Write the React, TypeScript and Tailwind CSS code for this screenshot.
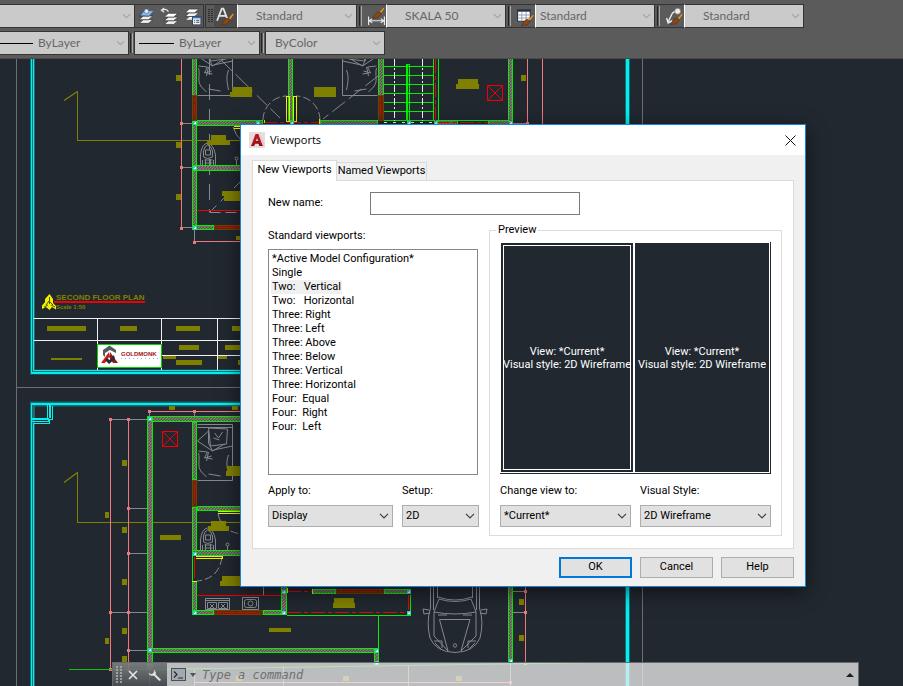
import React from 'react';

const GREEN = '#00f000';
const OLIVE = '#808000';
const PINK = '#f07878';
const GRAY = '#86898c';
const CYAN = '#00f0f0';

/* ---------- toolbar ---------- */

function Chevron({ className }: { className: string }) {
  return (
    <svg viewBox="0 0 10 6" className={className} fill="none" stroke="currentColor" strokeWidth="1.2" aria-hidden="true">
      <path d="M1 .8 5 4.8 9 .8" />
    </svg>
  );
}

function ToolCombo({ label, value, className, pad, line }: { label: string; value: string; className: string; pad: string; line?: string }) {
  return (
    <div className={`relative h-6 border border-[#333] bg-[#cacaca] ${className}`}>
      <select aria-label={label} className={`block h-full w-full appearance-none bg-transparent text-xs leading-[22px] text-[#666] outline-none ${pad}`}>
        <option>{value}</option>
      </select>
      {line && <span className={`pointer-events-none absolute top-[11px] h-px bg-black ${line}`} />}
      <Chevron className="pointer-events-none absolute right-[3px] top-2 h-[6px] w-[9px] text-[#a2a2a2]" />
    </div>
  );
}

function Sheets({ y = 0, x = 0, top = '#fff' }: { x?: number; y?: number; top?: string }) {
  return (
    <g transform={`translate(${x} ${y})`} stroke="#2c2c2c" strokeWidth=".6">
      <path d="M0 11.5 4 8h9l-4 3.500z" fill="#f2f2f2" />
      <path d="M0 8 4 4.500h9L9 8z" fill="#f2f2f2" />
      <path d="M0 4.500 4 1h9L9 4.500z" fill={top} />
    </g>
  );
}

function Brush({ x, y }: { x: number; y: number }) {
  return (
    <g transform={`translate(${x} ${y})`}>
      <path d="M7 4.500 11 0l1 1-3.500 5z" fill="#f0a030" stroke="#6b3a10" strokeWidth=".5" />
      <path d="M5.500 4.500 8.500 6.500 6 9.500C4 11 2 10 0 10.500 2 9.500 2 6 5.500 4.500z" fill="#8a4718" stroke="#5a2a0c" strokeWidth=".6" />
    </g>
  );
}

function IconButton({ label, className, children }: { label: string; className: string; children: React.ReactNode }) {
  return (
    <button type="button" aria-label={label} className={`flex h-[22px] items-center justify-center ${className}`}>
      <svg viewBox="0 0 18 18" className="h-[19px] w-[19px]" fill="none" aria-hidden="true">
        {children}
      </svg>
    </button>
  );
}

function Separator() {
  return <div className="h-5 w-[3px] border-l border-r border-l-[#222] border-r-[#a8a8a8]" />;
}

function Toolbars() {
  return (
    <div className="flex flex-col gap-[3px] border-b border-[#4a4a4a] bg-[#5b5b5b] pb-[3px] pt-1 font-['Lato','Open_Sans',sans-serif]">
      <div className="flex h-6 items-center">
        <div className="flex items-center border-y border-r border-[#333]">
          <ToolCombo label="Layer" value="" className="-my-px w-[135px] border-l-0" pad="pl-2" />
          <IconButton label="Make object's layer current" className="w-[23px]">
            <Sheets x={2} y={4} top="#5b93d8" />
            <path d="M3 8 7 3.500h9L11.500 8.500z" fill="#8db8ec" stroke="#24548c" strokeWidth=".5" />
            <circle cx="9" cy="4" r="2.200" fill="#dfe8f5" stroke="#456" strokeWidth=".5" />
          </IconButton>
          <IconButton label="Layer previous" className="w-[23px]">
            <Sheets x={4} y={5} />
            <path d="M8 4.500C7 2 4 2 1.500 3M4 .8 1.300 3 4 5" stroke="#e8e8e8" strokeWidth="1.100" />
          </IconButton>
          <IconButton label="Layer states" className="w-[22px]">
            <Sheets x={2} y={1} />
            <rect x="9" y="9" width="8" height="8" fill="#eef2f8" stroke="#33445c" />
            <path d="M9 10h8" stroke="#3d6fae" strokeWidth="1.500" />
            <path d="M10.500 12.500h1m1 0h3m-5 2h1m1 0h3" stroke="#444" />
          </IconButton>
        </div>
        <div className="ml-px flex h-6 items-center border-y border-l border-[#333] pl-0.5">
          <svg viewBox="0 0 5 14" className="mr-px h-[14px] w-[5px]" aria-hidden="true">
            <path d="M1 0v14M4 0v14" stroke="#1d1d1d" strokeWidth="1.500" strokeDasharray="1 1" />
          </svg>
          <IconButton label="Text style" className="w-[23px] bg-[#4c4c4c]">
            <path d="M1 13 5.500 1.500h1.500L11 12M3 8.500h6" stroke="#e4e4e4" strokeWidth="1.700" />
            <Brush x={5} y={6} />
          </IconButton>
        </div>
        <ToolCombo label="Text style name" value="Standard" className="w-[120px] border-l-white" pad="pl-[18px]" />
        <div className="flex h-6 items-center border-y border-[#333] pl-0.5">
          <Separator />
          <IconButton label="Dimension style" className="ml-1 w-5">
            <path d="M1.500 9v8M16.500 9v8M2 13h14M5 11l-3 2 3 2M13 11l3 2-3 2" stroke="#e8e8e8" strokeWidth="1.100" />
            <Brush x={5} y={0} />
          </IconButton>
        </div>
        <ToolCombo label="Dimension style name" value="SKALA 50" className="w-[120px] border-l-white" pad="pl-[18px]" />
        <div className="flex h-6 items-center border-y border-[#333] pl-0.5">
          <Separator />
          <IconButton label="Table style" className="ml-1 w-5">
            <rect x="1.500" y="2.500" width="12" height="11" fill="#fff" stroke="#28384c" />
            <path d="M1 3.500h13" stroke="#28384c" strokeWidth="2" />
            <path d="M2 7.500h11M2 10.500h11M5.500 5v8M9.500 5v8" stroke="#9aa2ad" />
            <Brush x={5} y={7} />
          </IconButton>
        </div>
        <ToolCombo label="Table style name" value="Standard" className="w-[120px] border-l-white" pad="pl-1" />
        <div className="flex h-6 items-center border-y border-[#333] pl-0.5">
          <Separator />
          <IconButton label="Multileader style" className="ml-1 w-5">
            <path d="M12 4C6 4 7 7 3 14M1.500 10.500 3 15l4-2" stroke="#e8e8e8" strokeWidth="1.400" />
            <circle cx="12" cy="4" r="2.800" fill="#eee" stroke="#777" strokeWidth=".6" />
            <Brush x={5} y={6} />
          </IconButton>
        </div>
        <ToolCombo label="Multileader style name" value="Standard" className="w-[120px] border-l-white" pad="pl-[18px]" />
      </div>
      <div className="flex h-6 items-center gap-px">
        <ToolCombo label="Linetype" value="ByLayer" className="w-[129px] border-l-0" pad="pl-[38px]" line="left-0 w-[33px]" />
        <Separator />
        <ToolCombo label="Lineweight" value="ByLayer" className="w-[126px]" pad="pl-11" line="left-1 w-[35px]" />
        <Separator />
        <ToolCombo label="Plot style" value="ByColor" className="w-[120px]" pad="pl-[9px]" />
      </div>
    </div>
  );
}

/* ---------- drawing ---------- */

type Box = [number, number, number, number];

const walls: Box[] = [
  [192, 58, 5, 172], [197, 120, 66, 6], [192, 165, 52, 6], [192, 225, 22, 5],
  [288, 58, 5, 63], [320, 120, 58, 6], [378, 58, 6, 63], [438, 120, 20, 6],
  [488, 120, 25, 6], [508, 58, 5, 64],
  [147, 416, 100, 6], [147, 416, 6, 254], [192, 422, 5, 58], [192, 507, 5, 48],
  [197, 506, 50, 5], [192, 550, 54, 6], [192, 581, 5, 34], [192, 610, 22, 5],
  [263, 610, 22, 5], [147, 648, 231, 5], [374, 648, 5, 17], [281, 580, 6, 35],
  [312, 589, 24, 5], [384, 589, 27, 5], [508, 580, 5, 83],
];

const browns: Box[] = [
  [192, 95, 5, 26], [214, 225, 30, 5], [378, 95, 6, 26], [192, 480, 5, 27],
  [214, 610, 49, 5], [336, 589, 48, 5],
];

const tags: Box[] = [
  [176, 75, 5, 6], [176, 142, 5, 6], [176, 194, 5, 6], [236, 236, 6, 4],
  [211, 135, 15, 5], [207, 140, 23, 5], [222, 191, 20, 5], [224, 196, 18, 5],
  [232, 87, 20, 5], [230, 92, 22, 5], [314, 87, 22, 10], [458, 79, 20, 5],
  [456, 84, 23, 5], [521, 75, 5, 6],
  [47, 326, 39, 5], [120, 326, 17, 5], [176, 326, 24, 5], [232, 326, 10, 5],
  [179, 345, 20, 5], [225, 345, 17, 5], [176, 360, 26, 5], [163, 356, 13, 3],
  [218, 356, 9, 3], [238, 360, 5, 5], [51, 358, 31, 2],
  [169, 406, 6, 4], [232, 406, 6, 4],
  [122, 460, 5, 6], [122, 527, 5, 6], [122, 579, 5, 6], [122, 628, 5, 6],
  [122, 656, 5, 6], [105, 512, 4, 6], [105, 638, 4, 6],
  [227, 466, 15, 5], [226, 471, 16, 5], [160, 535, 21, 5], [211, 521, 15, 5],
  [208, 526, 21, 5], [222, 576, 20, 5], [220, 581, 22, 5],
  [334, 598, 20, 5], [333, 603, 22, 5], [269, 628, 22, 4], [519, 599, 5, 6],
  [519, 635, 5, 6], [343, 676, 6, 5], [456, 676, 6, 5], [236, 676, 6, 5],
];

const nodes: [number, number][] = [
  [194, 122], [194, 167], [194, 227], [257, 122], [291, 122], [408, 122], [435, 122],
  [510, 122], [149, 418], [194, 553], [194, 612], [149, 649], [283, 612], [283, 591],
  [408, 591], [408, 612], [376, 650], [376, 662], [510, 660],
];

const dots: [number, number][] = [
  [181, 123], [181, 167], [181, 228], [194, 242], [149, 411], [194, 411],
  [110, 419], [128, 419], [128, 508], [128, 553], [110, 612], [128, 612],
  [128, 650], [110, 669], [128, 669], [527, 123], [525, 591], [525, 612],
  [525, 663], [510, 682],
];

function Bed({ y, flip }: { y: number; flip?: boolean }) {
  return (
    <g transform={flip ? `translate(377.500 ${y}) scale(-1 1)` : `translate(197.500 ${y})`} fill="none" stroke={GRAY}>
      <path d="M0 .5H35V56.500H0M0 3.500H35" />
      <path d="M11 4 30 5 29 20 13 22 11 4M0 17 11 7 11 19 15 27 0 17M16 26 35 22M15 27l12-7M1 27l9 1-3 6 7-2M17 9l4 5 4-6M16 14l6 2" />
      <path d="M1 29C3 36-1 42 4 48l5 5M11 28l-2 9M9 34l6 1M31 31c-3 8-1 14 0 20M11 50l12 2" />
    </g>
  );
}

function Toilet({ y }: { y: number }) {
  return (
    <g transform={`translate(200.500 ${y})`} fill="none" stroke={GRAY}>
      <path d="M0 22V12Q1 1 7 0 13 1 15 12V22M3 14V8Q4 3 7 2 11 3 12 8V14Q7 17 3 14ZM5 12V7h5v5zM4 17h8M4 20h8M5 16v6M10 16v6M2 22v-5M13 22v-5" />
    </g>
  );
}

function CrossBox({ x, y }: { x: number; y: number }) {
  return <path d={`M${x} ${y}h15v15h-15zl15 15M${x + 15} ${y}l-15 15`} fill="none" stroke="#f00000" />;
}

function Car() {
  return (
    <g fill="none" stroke={GRAY}>
      <path d="M430.500 580V608Q426 622 430 638 436 652 455 652.500 474 652 480 638 484 622 479.500 608V580M433.500 580V610M476.500 580V610M437.500 580V598M472.500 580V598" />
      <path d="M438 597Q455 603 472 597M434 612 439 599Q455 604 471 599L476 612Q455 616 434 612M438 615h9M463 615h9" />
      <path d="M439.500 619.500H470L461 651M439.500 619.500 448 651M434 612V636L448 651M476 612V636L461 651M434 641h8v7M476 641h-8v7M435 643l6 6M475 643l-6 6" />
      <path d="M430 613 424 614 423 609 429 610M480 613 486 614 487 609 481 610" />
      <circle cx="455" cy="645.500" r="1.700" />
    </g>
  );
}

function Drawing() {
  return (
    <svg viewBox="0 59 903 627" width="903" height="627" className="absolute left-0 top-0" role="img" aria-label="Floor plan drawing">
      <defs>
        <pattern id="hatch" width="3" height="3" patternUnits="userSpaceOnUse">
          <rect width="3" height="3" fill="#555656" />
          <path d="M0 3 3 0" stroke="#9a7878" strokeWidth="1.200" />
        </pattern>
      </defs>

      {/* sheet borders */}
      <g fill="none" stroke="#6c6e70" shapeRendering="crispEdges">
        <path d="M16.500 59V686M642.500 59V686M16 387.500H642" />
      </g>
      <path d="M32.500 59V372H627.500V59M627.500 403V686M32.500 686V404H628" fill="none" stroke={CYAN} strokeOpacity=".35" strokeWidth="5" />
      <g fill="none" stroke={CYAN} shapeRendering="crispEdges">
        <path d="M31.500 59V373M33.500 59V370.500H626.500V59" />
        <path d="M31 373H629M628 59V373M628 403V686M31 404H629" strokeWidth="2" />
        <path d="M31.500 403V686M33.500 423V686M626.500 406V686" />
        <path d="M47.500 404V418.500M50.500 404V418M52.500 406V419.500H49.500M49 419V423.500H33M31 421.500H48.500V418M31 418.500H48M49.500 404V418M31 419.500H48" />
      </g>

      {/* section markers */}
      <g fill="none" stroke="#808000">
        <path d="M64 100.500 77.500 91.500M64 482.500 77.500 472.500" strokeWidth="1.300" />
        <path d="M77.500 91V140.500H244M77.500 472V522.500H244" shapeRendering="crispEdges" />
      </g>

      {/* dimension lines */}
      <g fill="none" stroke={GRAY} shapeRendering="crispEdges">
        <path d="M181 123.500h12M181 167.500h12M181 227.500h12M194.500 230v12M149.500 411v6M194.500 411v6M110 419.500h38M128 508.500h20M128 553.500h20M110 612.500h38M128 650.500h20M513 123.500h14M513 591.500h12M513 612.500h12M194.500 670v16M283.500 666v20M408.500 665v21M510.500 663v23M149.500 670v16" />
      </g>
      <g fill="none" stroke={PINK} shapeRendering="crispEdges">
        <path d="M181.500 59V228M194 241.500H244M527.500 59V124M542.500 59V130M149 411.500H244M110.500 419V669M128.500 419V669M525.500 580V664M194 682.500H511" />
      </g>

      {/* furniture */}
      <Bed y={39} />
      <Bed y={39} flip />
      <Bed y={424} />
      <Toilet y={143} />
      <Toilet y={528} />
      <Car />
      <g fill="none" stroke={GRAY}>
        <path d="M209.500 59V212" strokeDasharray="16 9" />
        <path d="M209.500 212.500H244" strokeDasharray="11 5" />
        <path d="M210 212 244 178" strokeDasharray="9 6 14 5" />
        <path d="M222 61 280 118" strokeDasharray="14 5 24 6" />
        <path d="M378 76 323 119" strokeDasharray="16 5" />
        <path d="M263 120A24 24 0 0 1 287 96M320 120A24 24 0 0 0 296 96M222 557Q219 579 197 581M218 514Q222 532 242 534" strokeDasharray="8 3" />
        <path d="M233 127Q236 136 241 140" />
        <circle cx="236.500" cy="158.500" r="1.500" />
        <path d="M236.500 160v5M227.500 546v4" />
        <circle cx="227.500" cy="544.500" r="1.500" />
        <path d="M205.500 598.500h24v11h-24zM205 600.500h25M207.500 602.500h9v6h-9zM218.500 602.500h9v6h-9zM210 604l4 4M214 604l-4 4M221 604l4 4M225 604l-4 4" />
        <path d="M242.500 597.500h16v12h-16z" />
        <rect x="244.500" y="599.500" width="12" height="8" rx="2" />
        <circle cx="250.500" cy="603.500" r="2.500" />
        <path d="M263.500 580v15.500H281" />
      </g>

      {/* walls, windows and doors */}
      <g shapeRendering="crispEdges">
        {walls.map(([x, y, w, h], i) => (
          <g key={i}>
            <rect x={x} y={y} width={w} height={h} fill={GREEN} />
            <rect x={x + 1} y={y + 1} width={w - 2} height={h - 2} fill="url(#hatch)" />
          </g>
        ))}
        {browns.map(([x, y, w, h], i) => (
          <g key={i}>
            <rect x={x} y={y} width={w} height={h} fill="#7a3c00" />
            <rect x={x + 1} y={y + 1} width={w - 2} height={h - 2} fill="#55300c" />
            <path d={w > h ? `M${x + 3} ${y + 2.5}h${w - 6}` : `M${x + 2.5} ${y + 3}v${h - 6}`} stroke="#e00000" strokeDasharray="5 1 12 2" />
          </g>
        ))}
        <g fill="none" stroke={GREEN}>
          <path d="M384 66.500h49M384 75.500h49M384 84.500h49M384 93.500h49M384 102.500h49M384 111.500h49M406.500 121V64.500H409.500V121M407.500 64V121M433.500 59V121M438.500 59V121M384 120.500H438M458 120.500h30" />
          <path d="M287 615.500H410.500V595M378.500 615V648M192.500 555V582" />
        </g>
        <g fill="none" stroke="#f0f0f0">
          <path d="M394.500 59V121M422.500 59V121" strokeDasharray="7 2 2 2" />
          <path d="M384 122.500h50" strokeDasharray="3 6" />
        </g>
        <g fill="none" stroke="#f00000">
          <path d="M197 210.500H244M197 595.500H281M408.500 595V610M194.500 557V578" />
          <path d="M435.500 59V121M436 122.500H488M263 122.500H320M287 591.500H312M287 612.500H405" strokeDasharray="14 3 4 3" />
        </g>
        <g fill="none" stroke="#f0f000">
          <path d="M286.500 96.500h3v25h-3zM293.500 96.500h3v25h-3zM234 126.500h10M234 128.500h10M218 511.500h26M218 513.500h26M196 556.500h26v2h-26M287.500 588v5M312.500 589v5M264 120v3M319.500 119v5M192 581.500h5" />
        </g>
        {tags.map(([x, y, w, h], i) => (
          <rect key={i} x={x} y={y} width={w} height={h} fill={OLIVE} />
        ))}
        {nodes.map(([x, y], i) => (
          <g key={i}>
            <rect x={x - 1} y={y - 1} width="4" height="4" fill="#40c8c8" />
            <path d={`M${x} ${y + 1.5}h1v-1h1`} fill="none" stroke="#d8f8f8" />
          </g>
        ))}
        {dots.map(([x, y], i) => (
          <rect key={i} x={x - 1} y={y - 1} width="3" height="3" fill={PINK} />
        ))}
      </g>
      <CrossBox x={487.5} y={85.5} />
      <CrossBox x={162.5} y={431.5} />
      <path d="M69 669.500H150L597 662.500" fill="none" stroke="#10c010" />

      {/* title block */}
      <path d="M49.500 294 53 299V303L56 306V309.500L52 307 49.500 310 46 307 42 309V305.500L45 302V299Z" fill="#f0f000" />
      <path d="M49.500 297v7M46 305l3-4 4 4M44 307l4-2M55 307l-4-2" stroke="#55550a" fill="none" />
      <text x="56" y="300" fill={OLIVE} fontSize="8" fontWeight="700" fontFamily="Liberation Sans, sans-serif">SECOND FLOOR PLAN</text>
      <path d="M54 302H145" stroke="#f00000" strokeWidth="2" />
      <text x="56" y="309" fill={OLIVE} fontSize="6" fontWeight="700" fontFamily="Liberation Sans, sans-serif">Scale 1:50</text>
      <g fill="none" stroke="#f0f0f0" shapeRendering="crispEdges">
        <path d="M34 318.500H244M34 340.500H244M162 355.500H244M97.500 318V370M161.500 318V370M217.500 318V370" />
      </g>
      <rect x="97.500" y="344.500" width="64" height="23" fill="#fff" stroke="#00d800" shapeRendering="crispEdges" />
      <path d="M109.500 345.500 116 350V353L110 350 105 353V357L103 355V350Z" fill="#55585c" />
      <path d="M109 352 101 363H105L109 357Z" fill="#d01818" />
      <path d="M110 352 118 363H113L109 357Z" fill="#8c1c20" />
      <path d="M109 364 105 360 107 358 109.500 360 114 355 115 359Z" fill="#2a2c30" />
      <text x="121" y="356" fill="#9c1420" fontSize="6" fontWeight="700" fontFamily="Liberation Sans, sans-serif">GOLDMONK</text>
      <path d="M121 358.500h37" stroke="#b0b0b0" strokeDasharray="1 3" />
    </svg>
  );
}

/* ---------- dialog ---------- */

function Field({ id, label, options, className }: { id: string; label: string; options: string[]; className: string }) {
  return (
    <div className={`flex flex-col gap-[7px] ${className}`}>
      <label htmlFor={id} className="leading-[14px]">{label}</label>
      <div className="relative">
        <select id={id} className="block h-[22px] w-full appearance-none border border-[#adadad] bg-[#e1e1e1] pl-[3px] outline-none">
          {options.map((o) => (
            <option key={o}>{o}</option>
          ))}
        </select>
        <Chevron className="pointer-events-none absolute right-1 top-2 h-[6px] w-[10px] text-[#404040]" />
      </div>
    </div>
  );
}

const NB = '\u00a0';
const configurations = [
  '*Active Model Configuration*',
  'Single',
  `Two:${NB}${NB} Vertical`,
  `Two:${NB}${NB} Horizontal`,
  'Three: Right',
  'Three: Left',
  'Three: Above',
  'Three: Below',
  'Three: Vertical',
  'Three: Horizontal',
  `Four:${NB} Equal`,
  `Four:${NB} Right`,
  `Four:${NB} Left`,
];

function ViewLabel() {
  return (
    <p className="whitespace-nowrap text-center leading-[13px] text-white">
      View: *Current*
      <br />
      Visual style: 2D Wireframe
    </p>
  );
}

function ViewportsDialog() {
  return (
    <section
      role="dialog"
      aria-labelledby="dialog-title"
      className="absolute left-[240px] top-[65px] w-[566px] border border-[#1883d7] bg-[#f0f0f0] font-['Roboto','Liberation_Sans',sans-serif] text-[11px] text-black shadow-[0_5px_18px_rgba(0,0,0,0.55)]"
    >
      <header className="flex h-[30px] items-center bg-white pl-2 pr-[9px]">
        <svg viewBox="0 0 16 16" className="h-4 w-4" aria-hidden="true">
          <rect width="16" height="16" fill="#e6dcde" />
          <path d="M2 14 6.500 2h3L14 14h-3.500L9.500 11.500H6L5 14z" fill="#b81820" />
          <path d="M9.500 2 14 14l2-2L11 3z" fill="#e6c8cc" />
          <path d="M7 9h2L8 6z" fill="#e6dcde" />
          <path d="M2 14 6 10l3-1 5 5h-3.500L9.500 11.500H6L5 14z" fill="#8c1018" />
        </svg>
        <h1 id="dialog-title" className="ml-[5px] flex-1 font-['Open_Sans','Noto_Sans',sans-serif] text-[11px]">Viewports</h1>
        <button type="button" aria-label="Close">
          <svg viewBox="0 0 11 11" className="h-[11px] w-[11px]" stroke="#111" aria-hidden="true">
            <path d="M.5.5 10.500 10.500M10.500.5.5 10.500" />
          </svg>
        </button>
      </header>

      <div className="px-[11px] pb-2 pt-[5px]">
        <div role="tablist" className="flex items-end">
          <button type="button" role="tab" aria-selected="true" className="relative z-10 -mb-px h-[21px] w-[85px] border border-b-0 border-[#dadada] bg-white pb-0.5">
            New Viewports
          </button>
          <button type="button" role="tab" aria-selected="false" className="h-[18px] w-[90px] border border-b-0 border-l-0 border-[#dadada] bg-[#f0f0f0]">
            Named Viewports
          </button>
        </div>

        <div role="tabpanel" className="border border-[#dadada] bg-white pb-3 pl-[15px] pr-[11px] pt-[11px]">
          <div className="flex items-center">
            <label htmlFor="new-name" className="w-[102px]">New name:</label>
            <input id="new-name" type="text" className="h-[23px] w-[210px] border border-[#7a7a7a] bg-white px-1 outline-none" />
          </div>

          <div className="mt-2 flex justify-between">
            <div className="w-[211px] pt-[6px]">
              <label htmlFor="configs" className="block leading-[14px]">Standard viewports:</label>
              <select
                id="configs"
                size={13}
                defaultValue={configurations[2]}
                className="mt-[6px] block h-[226px] w-[210px] appearance-none overflow-hidden border border-[#828790] bg-white px-0.5 pt-0.5 outline-none"
              >
                {configurations.map((c) => (
                  <option key={c} value={c} className="h-[14px] min-h-0 w-fit px-px py-0 leading-[14px] text-black checked:bg-[linear-gradient(#f0f0f0,#f0f0f0)]">
                    {c}
                  </option>
                ))}
              </select>
              <div className="mt-[9px] flex justify-between">
                <Field id="apply" label="Apply to:" options={['Display', 'Current Viewport']} className="w-[125px]" />
                <Field id="setup" label="Setup:" options={['2D', '3D']} className="w-[77px]" />
              </div>
            </div>

            <fieldset className="w-[293px] border border-[#dcdcdc] px-[10px] pb-2">
              <legend className="-ml-1 px-0.5 leading-[14px]">Preview</legend>
              <div className="mt-[5px] flex h-[232px] gap-0.5 border-b border-r border-[#212830] bg-white p-px">
                <div className="w-[132px] bg-[#212830] p-0.5">
                  <div className="flex h-full items-center justify-center border border-white">
                    <ViewLabel />
                  </div>
                </div>
                <div className="flex flex-1 items-center justify-center bg-[#212830]">
                  <ViewLabel />
                </div>
              </div>
              <div className="mt-[10px] flex justify-between">
                <Field id="view" label="Change view to:" options={['*Current*', '*Top*']} className="w-[131px]" />
                <Field id="style" label="Visual Style:" options={['2D Wireframe', 'Wireframe']} className="w-[131px]" />
              </div>
            </fieldset>
          </div>
        </div>

        <div className="mt-2 flex justify-end gap-2">
          <button type="button" className="h-[21px] w-[73px] border-2 border-[#0078d7] bg-[#e1e1e1]">OK</button>
          <button type="button" className="h-[21px] w-[73px] border border-[#adadad] bg-[#e1e1e1]">Cancel</button>
          <button type="button" className="h-[21px] w-[73px] border border-[#adadad] bg-[#e1e1e1]">Help</button>
        </div>
      </div>
    </section>
  );
}

/* ---------- command line ---------- */

function CommandLine() {
  return (
    <div className="absolute bottom-0 left-[112px] flex h-6 w-[747px] border border-b-0 border-[#66696d]">
      <div className="flex w-[54px] items-center gap-[6px] bg-[linear-gradient(#808284e6,#4b4e52e6)] pl-[3px]">
        <svg viewBox="0 0 6 18" className="h-[18px] w-[6px]" aria-hidden="true">
          <path d="M1 0v18M5 0v18" stroke="#b5b5b5" strokeWidth="1.500" strokeDasharray="2 1" />
        </svg>
        <button type="button" aria-label="Close command line">
          <svg viewBox="0 0 10 10" className="h-[10px] w-[10px]" stroke="#e6e6e6" strokeWidth="1.600" aria-hidden="true">
            <path d="M1 1 9 9M9 1 1 9" />
          </svg>
        </button>
        <button type="button" aria-label="Customize" className="ml-1">
          <svg viewBox="0 0 14 14" className="h-[14px] w-[14px]" aria-hidden="true">
            <path d="M4 1 6 3 5 5 3 6 1 4Q0 7 3 8L6 8 11 13Q13 13.500 13 11.500L8 6.500Q9 2 4 1Z" fill="#e2e2e2" stroke="#555" strokeWidth=".5" />
          </svg>
        </button>
      </div>
      <div className="flex flex-1 items-center bg-[#efefef]/75 pl-1 pr-1">
        <button type="button" aria-label="Recent commands" className="flex items-center gap-1">
          <svg viewBox="0 0 15 13" className="h-[13px] w-[15px]" fill="none" stroke="#4b5158" aria-hidden="true">
            <rect x=".5" y=".5" width="14" height="12" fill="#a4a9b0" />
            <path d="M3 3.500 6 6.500 3 9.500M7 10h5" stroke="#222a34" strokeWidth="1.200" />
          </svg>
          <svg viewBox="0 0 6 4" className="h-1 w-[6px]" aria-hidden="true">
            <path d="M0 0h6L3 4z" fill="#555" />
          </svg>
        </button>
        <input
          type="text"
          aria-label="Command"
          placeholder="Type a command"
          className="ml-[6px] min-w-0 flex-1 bg-transparent font-['DejaVu_Sans_Mono',monospace] text-xs italic outline-none placeholder:text-[#6f6f70]"
        />
        <button type="button" aria-label="Command history">
          <svg viewBox="0 0 8 4" className="h-1 w-2" aria-hidden="true">
            <path d="M0 4h8L4 0z" fill="#1e1e1e" />
          </svg>
        </button>
      </div>
    </div>
  );
}

export default function App() {
  return (
    <div className="flex min-h-screen flex-col bg-[#212830]">
      <Toolbars />
      <main className="relative min-h-[560px] flex-1 overflow-hidden">
        <Drawing />
        <ViewportsDialog />
        <CommandLine />
      </main>
    </div>
  );
}
